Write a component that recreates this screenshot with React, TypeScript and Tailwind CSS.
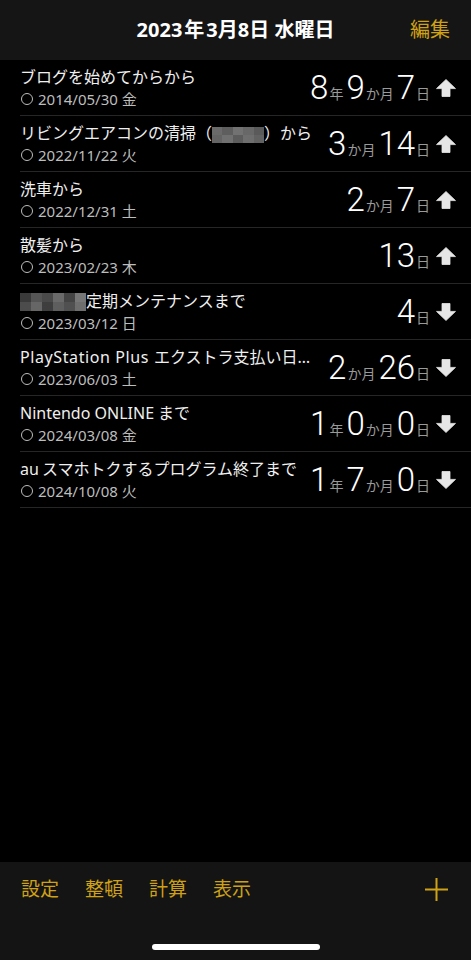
import React from 'react'

type Part = { n: string; u: string }
type Item = {
  title: React.ReactNode
  date: string
  parts: Part[]
  up: boolean
}

const GOLD = 'text-[#cfa114]'

function Mosaic({ cells, w, h }: { cells: string[][]; w: number; h: number }) {
  return (
    <span className="inline-flex flex-col align-middle" style={{ width: w, height: h }}>
      {cells.map((row, i) => (
        <span key={i} className="flex flex-1">
          {row.map((c, j) => (
            <span key={j} className="flex-1" style={{ backgroundColor: c }} />
          ))}
        </span>
      ))}
    </span>
  )
}

function Arrow({ up }: { up: boolean }) {
  return (
    <svg width="20" height="18" viewBox="0 0 20 18" className={up ? '' : 'rotate-180'}>
      <path d="M10 0.5 L19.5 9.6 H14 V17.5 H6 V9.6 H0.5 Z" fill="#e6e6e6" strokeLinejoin="round" stroke="#e6e6e6" strokeWidth="0.8" />
    </svg>
  )
}

const items: Item[] = [
  { title: 'ブログを始めてからから', date: '2014/05/30 金', parts: [{ n: '8', u: '年' }, { n: '9', u: 'か月' }, { n: '7', u: '日' }], up: true },
  {
    title: (
      <>
        リビングエアコンの清掃（
        <Mosaic w={52} h={16} cells={[['#6a6a6a', '#5e5e5e', '#727272', '#686868', '#5a5a5a'], ['#646464', '#707070', '#5c5c5c', '#6e6e6e', '#626262']]} />
        ）から
      </>
    ),
    date: '2022/11/22 火',
    parts: [{ n: '3', u: 'か月' }, { n: '14', u: '日' }],
    up: true,
  },
  { title: '洗車から', date: '2022/12/31 土', parts: [{ n: '2', u: 'か月' }, { n: '7', u: '日' }], up: true },
  { title: '散髪から', date: '2023/02/23 木', parts: [{ n: '13', u: '日' }], up: true },
  {
    title: (
      <>
        <Mosaic w={66} h={18} cells={[['#3a3a3a', '#555555', '#4a4a4a', '#6a6a6a', '#444444', '#777777'], ['#4c4c4c', '#666666', '#3e3e3e', '#5e5e5e', '#505050', '#6e6e6e']]} />
        定期メンテナンスまで
      </>
    ),
    date: '2023/03/12 日',
    parts: [{ n: '4', u: '日' }],
    up: false,
  },
  {
    title: <><span className="tracking-[0.6px]">PlayStation Plus</span><span className="ml-[5px]">エクストラ支払い日まで</span></>,
    date: '2023/06/03 土',
    parts: [{ n: '2', u: 'か月' }, { n: '26', u: '日' }],
    up: false,
  },
  {
    title: <>Nintendo ONLINE<span className="ml-[4px]">まで</span></>,
    date: '2024/03/08 金',
    parts: [{ n: '1', u: '年' }, { n: '0', u: 'か月' }, { n: '0', u: '日' }],
    up: false,
  },
  {
    title: <>au<span className="ml-[3px]">スマホトクするプログラム終了まで</span></>,
    date: '2024/10/08 火',
    parts: [{ n: '1', u: '年' }, { n: '7', u: 'か月' }, { n: '0', u: '日' }],
    up: false,
  },
]

function Row({ item }: { item: Item }) {
  return (
    <div className="ml-[20px] h-[56px] border-b border-[#262626] flex items-center pr-[15px]">
      <div className="flex-1 min-w-0 pt-[1px]">
        <div className="truncate text-[16px] leading-[20px] text-[#efefef]">{item.title}</div>
        <div className="flex items-center gap-[5px] text-[15px] leading-[20px] text-[#bdbdbd] mt-[2px]">
          <span className="inline-block w-[12px] h-[12px] rounded-full border-[1.3px] border-[#bdbdbd] ml-[1px]" />
          <span>{item.date}</span>
        </div>
      </div>
      <div className="shrink-0 flex items-center gap-[6px] ml-[8px]">
        <div className="flex items-baseline">
          {item.parts.map((p, i) => (
            <span key={i} className={`flex items-baseline ${i > 0 ? 'ml-[3px]' : ''}`}>
              <span className="text-[33px] leading-[36px] font-light text-white font-['Roboto',sans-serif]">{p.n}</span>
              <span className="text-[14px] text-[#9a9a9a] ml-[1px]">{p.u}</span>
            </span>
          ))}
        </div>
        <Arrow up={item.up} />
      </div>
    </div>
  )
}

export default function App() {
  return (
    <div className="w-[471px] h-[960px] bg-black flex flex-col font-['Noto_Sans','Noto_Sans_CJK_JP',sans-serif]">
      {/* Header */}
      <div className="h-[60px] shrink-0 bg-[#151515] relative flex items-center justify-center">
        <span className="text-[20px] font-bold text-white">2023<span className="mx-[2px]">年</span>3月8日 水曜日</span>
        <span className={`absolute right-[21px] text-[20px] ${GOLD}`}>編集</span>
      </div>

      {/* List */}
      <div className="flex-1">
        {items.map((it, i) => (
          <Row key={i} item={it} />
        ))}
      </div>

      {/* Toolbar */}
      <div className="h-[98px] shrink-0 bg-[#141414] flex flex-col justify-between pb-[10px]">
        <div className={`flex items-center pl-[21px] pr-[23px] pt-[13px] text-[19px] ${GOLD}`}>
          <div className="flex gap-[26px]">
            <span>設定</span>
            <span>整頓</span>
            <span>計算</span>
            <span>表示</span>
          </div>
          <svg className="ml-auto" width="23" height="23" viewBox="0 0 23 23">
            <path d="M11.5 0 V23 M0 11.5 H23" stroke="#cfa114" strokeWidth="2" />
          </svg>
        </div>
        <div className="self-center w-[168px] h-[6px] rounded-full bg-white" />
      </div>
    </div>
  )
}
